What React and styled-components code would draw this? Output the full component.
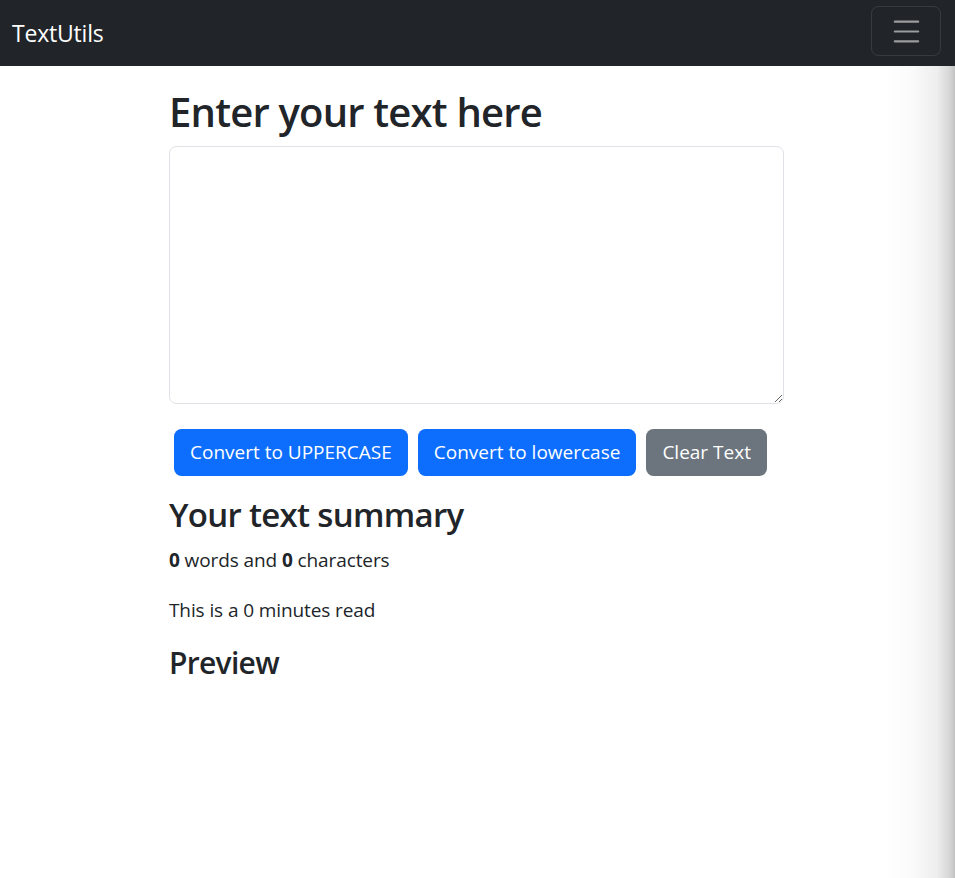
import React, { useState } from 'react';
import styled, { createGlobalStyle } from 'styled-components';

const GlobalStyle = createGlobalStyle`
  * { box-sizing: border-box; }
  body {
    margin: 0;
    background: #fff;
    color: #212529;
    font-family: "Open Sans", "Noto Sans", "Liberation Sans", sans-serif;
    font-size: 19px;
    line-height: 1.5;
  }
`;

const Navbar = styled.nav`
  height: 66px;
  background-color: #212529;
  display: flex;
  align-items: center;
  justify-content: space-between;
  padding: 0 14px 4px 12px;
`;

const Brand = styled.a`
  color: #fff;
  font-size: 23px;
  text-decoration: none;
  letter-spacing: -0.2px;
  margin-top: 4px;
`;

const Toggler = styled.button`
  width: 70px;
  height: 50px;
  background: transparent;
  border: 1.25px solid rgba(255, 255, 255, 0.1);
  border-radius: 7.5px;
  display: flex;
  align-items: center;
  justify-content: center;
  padding: 0;
`;

const Shade = styled.div`
  position: fixed;
  top: 66px;
  right: 0;
  bottom: 0;
  width: 70px;
  pointer-events: none;
  background: linear-gradient(
    to right,
    rgba(0, 0, 0, 0) 0%,
    rgba(0, 0, 0, 0.02) 40%,
    rgba(0, 0, 0, 0.07) 75%,
    rgba(0, 0, 0, 0.16) 92%,
    rgba(0, 0, 0, 0.24) 100%
  );
`;

const Container = styled.div`
  width: 615px;
  margin: 22px auto 20px;
  position: relative;
  left: -1px;
`;

const Title = styled.h1`
  font-size: 40px;
  font-weight: 600;
  line-height: 1.2;
  margin: 0 0 10px;
  letter-spacing: -0.8px;
`;

const Heading = styled.h2`
  font-size: ${(p) => p.$size}px;
  font-weight: 600;
  line-height: 1.2;
  margin: 0 0 10px;
  letter-spacing: -0.7px;
`;

const TextArea = styled.textarea`
  display: block;
  width: 100%;
  height: 258px;
  padding: 7.5px 15px;
  border: 1.25px solid #dee2e6;
  border-radius: 7.5px;
  font: inherit;
  color: #212529;
  resize: vertical;
  margin-bottom: 20px;
  outline: none;
`;

const ButtonRow = styled.div`
  display: flex;
  gap: 10px;
  padding: 5px 5px;
`;

const Button = styled.button`
  height: 47px;
  padding: 0 16px;
  border: none;
  border-radius: 7.5px;
  background-color: ${(p) => (p.$variant === 'secondary' ? '#6c757d' : '#0d6efd')};
  color: #fff;
  font: inherit;
  cursor: pointer;
`;

const Summary = styled.div`
  margin-top: 14px;
`;

const Para = styled.p`
  margin: 0 0 20px;
  line-height: 30px;
  letter-spacing: -0.1px;
`;

function MenuIcon() {
  return (
    <svg width="37" height="37" viewBox="0 0 30 30">
      <path
        d="M5.5 7h19M5.5 15h19M5.5 23h19"
        stroke="rgba(255,255,255,0.55)"
        strokeWidth="1.7"
        strokeLinecap="round"
      />
    </svg>
  );
}

export default function App() {
  const [text, setText] = useState('');
  const words = text.split(/\s+/).filter((w) => w.length).length;

  return (
    <>
      <GlobalStyle />
      <Navbar>
        <Brand href="#">TextUtils</Brand>
        <Toggler aria-label="Toggle navigation">
          <MenuIcon />
        </Toggler>
      </Navbar>
      <Shade />
      <Container>
        <Title>Enter your text here</Title>
        <TextArea value={text} onChange={(e) => setText(e.target.value)} />
        <ButtonRow>
          <Button onClick={() => setText(text.toUpperCase())}>Convert to UPPERCASE</Button>
          <Button onClick={() => setText(text.toLowerCase())}>Convert to lowercase</Button>
          <Button $variant="secondary" onClick={() => setText('')}>
            Clear Text
          </Button>
        </ButtonRow>
        <Summary>
          <Heading $size={33}>Your text summary</Heading>
          <Para>
            <b>{words}</b> words and <b>{text.length}</b> characters
          </Para>
          <Para>This is a {0.008 * words} minutes read</Para>
          <Heading $size={30}>Preview</Heading>
          <Para>{text}</Para>
        </Summary>
      </Container>
    </>
  );
}
